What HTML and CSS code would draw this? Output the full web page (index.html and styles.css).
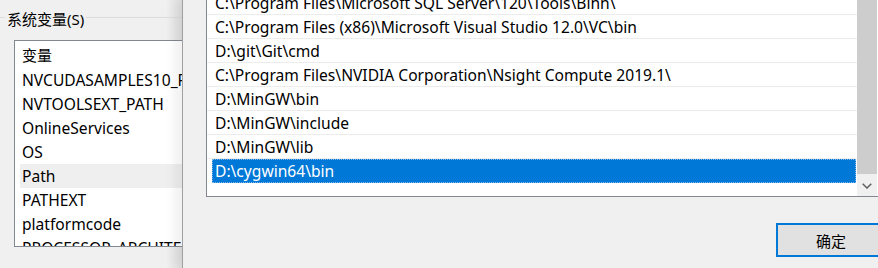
FILE: index.html
```html
<!DOCTYPE html>
<html lang="zh-CN">
<head>
<meta charset="utf-8">
<title>环境变量</title>
<link rel="stylesheet" href="styles.css">
</head>
<body>
<div class="desk">
  <section class="win-left">
    <div class="group-title"><span class="group-label">系统变量(S)</span></div>
    <div class="varlist">
      <div class="var-head">变量</div>
      <div class="var-row">NVCUDASAMPLES10_ROOT</div>
      <div class="var-row">NVTOOLSEXT_PATH</div>
      <div class="var-row">OnlineServices</div>
      <div class="var-row">OS</div>
      <div class="var-row is-current">Path</div>
      <div class="var-row">PATHEXT</div>
      <div class="var-row">platformcode</div>
      <div class="var-row">PROCESSOR_ARCHITECTURE</div>
    </div>
  </section>
  <section class="win-right">
    <div class="pathlist">
      <div class="path-rows">
        <div class="path-row">C:\Program Files\Microsoft SQL Server\120\Tools\Binn\</div>
        <div class="path-row">C:\Program Files (x86)\Microsoft Visual Studio 12.0\VC\bin</div>
        <div class="path-row">D:\git\Git\cmd</div>
        <div class="path-row">C:\Program Files\NVIDIA Corporation\Nsight Compute 2019.1\</div>
        <div class="path-row">D:\MinGW\bin</div>
        <div class="path-row">D:\MinGW\include</div>
        <div class="path-row">D:\MinGW\lib</div>
        <div class="path-row is-selected">D:\cygwin64\bin</div>
      </div>
      <div class="vscroll">
        <div class="vscroll-thumb"></div>
        <div class="vscroll-arrow">
          <svg width="10" height="6" viewBox="0 0 10 6"><path d="M0.7 0.7 L5 5 L9.3 0.7" fill="none" stroke="#606060" stroke-width="1.5"/></svg>
        </div>
      </div>
    </div>
    <div class="actions">
      <button class="btn-primary" type="button">确定</button>
    </div>
  </section>
</div>
</body>
</html>
```
FILE: styles.css
```css
* { box-sizing: border-box; }
html, body { margin: 0; padding: 0; }
body {
  width: 878px;
  height: 268px;
  overflow: hidden;
  background: #f0f0f0;
  font-family: "Noto Sans", "Noto Sans CJK SC", sans-serif;
  font-size: 15.6px;
  color: #000;
}
.desk {
  display: flex;
  height: 268px;
}
.win-left {
  width: 182px;
  flex-shrink: 0;
  overflow: hidden;
  background: linear-gradient(to right, #f0f0f0 0, #f0f0f0 166px, #e0e0e0 182px);
}
.group-title {
  display: flex;
  align-items: flex-start;
  gap: 2px;
  height: 24px;
  margin-top: 8px;
}
.group-title::before,
.group-title::after {
  content: "";
  height: 1px;
  margin-top: 9px;
  background: #dcdcdc;
}
.group-title::before { width: 5px; flex-shrink: 0; }
.group-title::after { flex: 1; }
.group-label {
  font-size: 15px;
  line-height: 23px;
  white-space: nowrap;
}
.varlist {
  margin: 8px 0 0 14px;
  width: 300px;
  height: 207px;
  border: 1px solid #828790;
  background: #fff;
  overflow: hidden;
}
.var-head {
  height: 27px;
  line-height: 28px;
  padding-left: 7px;
  font-size: 15px;
}
.var-row {
  height: 24px;
  line-height: 25px;
  margin-left: 5px;
  padding-left: 2px;
  white-space: nowrap;
}
.var-row.is-current { background: #efefef; }

.win-right {
  flex: 1;
  min-width: 0;
  overflow: hidden;
  border-left: 1px solid #a0a0a0;
  background: #f0f0f0;
  box-shadow: -8px 0 10px rgba(0,0,0,0.06);
}
.pathlist {
  display: flex;
  width: 673px;
  height: 207px;
  margin: -10px 0 0 23px;
  border: 1px solid #828790;
  border-right-color: #f0f0f0;
  padding-right: 1px;
  background: #fff;
}
.path-rows {
  width: 650px;
  flex-shrink: 0;
}
.path-row {
  height: 24px;
  line-height: 24px;
  padding-left: 8px;
  border-bottom: 1px solid #ececec;
  white-space: nowrap;
}
.path-row.is-selected {
  margin: 0 1px 0 5px;
  padding-left: 2px;
  background: #0078d7;
  color: #fff;
  border: 1px dotted #7fb6e8;
  line-height: 22px;
}
.vscroll {
  width: 20px;
  display: flex;
  flex-direction: column;
  background: #f0f0f0;
}
.vscroll-thumb {
  height: 183px;
  background: #cdcdcd;
}
.vscroll-arrow {
  flex: 1;
  display: flex;
  align-items: center;
  justify-content: center;
  padding-top: 1px;
}
.vscroll-arrow svg { display: block; }
.actions {
  display: flex;
  justify-content: flex-end;
  padding-top: 26px;
}
.btn-primary {
  width: 110px;
  height: 34px;
  margin-right: -8px;
  border: 2px solid #0078d7;
  background: #e1e1e1;
  font-family: "Noto Sans CJK SC", sans-serif;
  font-size: 15px;
  color: #000;
  padding: 0;
}
```
